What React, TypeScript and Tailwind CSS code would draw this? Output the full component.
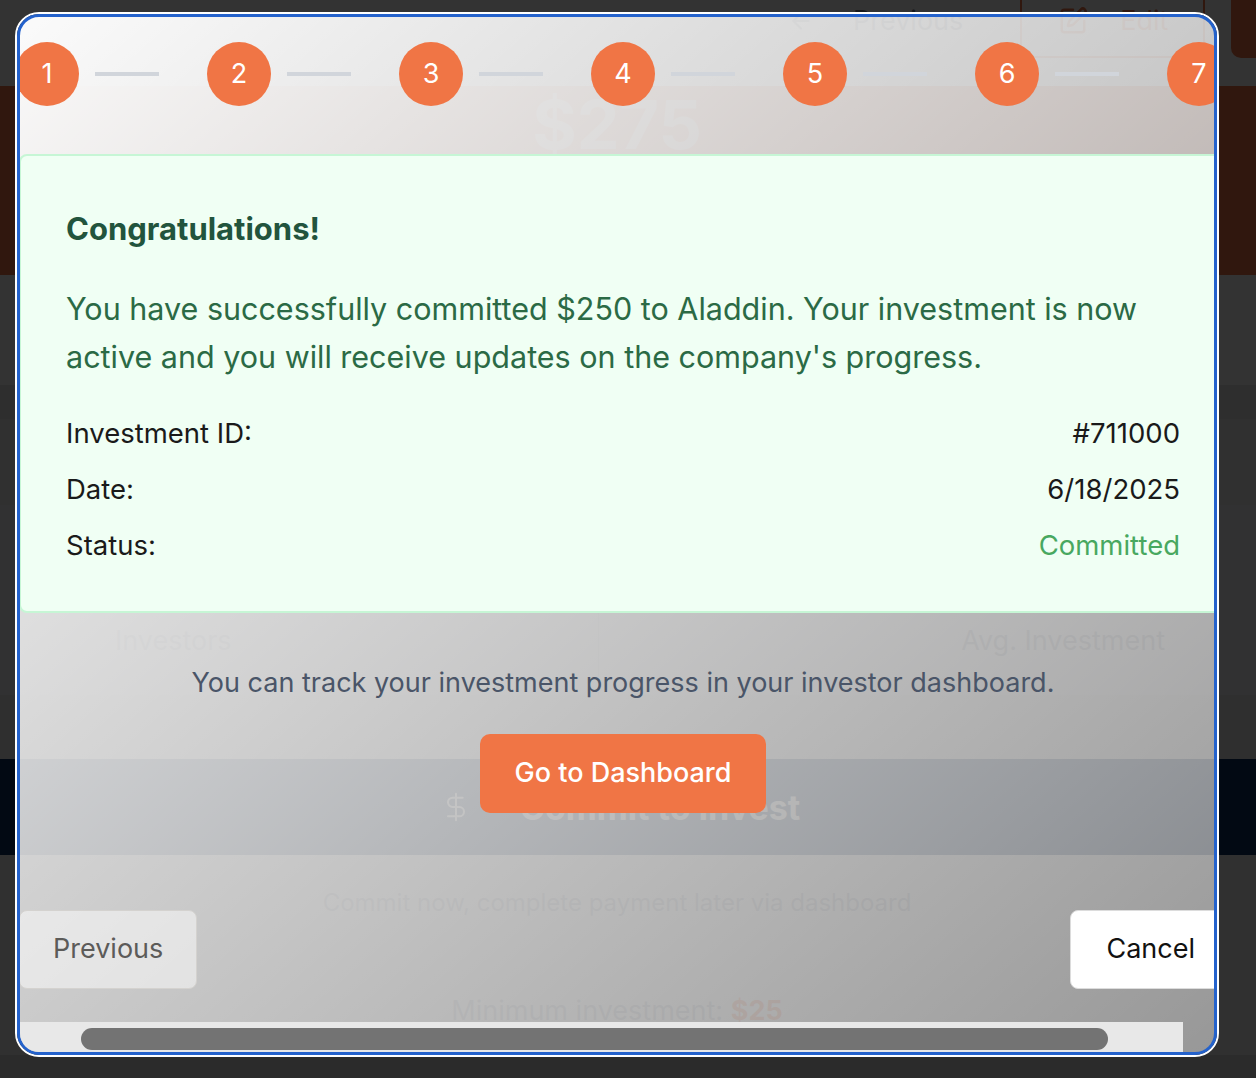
import { ArrowLeft, DollarSign, SquarePen } from 'lucide-react'

const steps = [1, 2, 3, 4, 5, 6, 7]

const details = [
  { label: 'Investment ID:', value: '#711000', tone: 'text-[#1a1a1a]' },
  { label: 'Date:', value: '6/18/2025', tone: 'text-[#1a1a1a]' },
  { label: 'Status:', value: 'Committed', tone: 'text-[#48a860]' },
]

export default function App() {
  return (
    <div className="relative h-[1078px] w-[1256px] overflow-hidden bg-white font-['Inter','Noto_Sans',sans-serif]">
      {/* Page behind the dialog */}
      <div className="flex flex-col">
        <div className="h-[86px] bg-white">
          <div className="-mt-[16px] flex h-[74px] items-stretch pl-[788px]">
            <div className="flex shrink-0 items-center gap-[39px] text-[27px] leading-[36px] text-gray-500">
              <ArrowLeft className="h-[26px] w-[26px]" strokeWidth={2} />
              <span>Previous</span>
            </div>
            <div className="ml-[57px] flex w-[185px] shrink-0 items-center gap-[32px] rounded-[10px] border-2 border-[#f07545] pl-[36px] text-[27px] leading-[36px] text-[#f07545]">
              <SquarePen className="h-[30px] w-[30px]" />
              <span>Edit</span>
            </div>
            <div className="ml-[26px] w-[120px] shrink-0 rounded-[10px] bg-[#f07545]" />
          </div>
        </div>

        <div className="flex h-[189px] justify-center bg-[#f07545] pr-[22px] pt-[4px]">
          <span className="text-[68px] font-bold leading-none text-white/70">$275</span>
        </div>

        <div className="h-[110px] bg-white" />
        <div className="h-[34px] bg-[#e6e6e6]" />
        <div className="h-[86px] bg-[#f0f0f0]" />

        <div className="flex h-[190px] flex-col justify-end bg-[#f4f5f7]">
          <div className="grid h-[95px] grid-cols-[598px_1fr] text-[27px] leading-[36px] text-gray-400">
            <div className="pl-[115px] pt-[23px]">Investors</div>
            <div className="border-l border-gray-300 pr-[91px] pt-[23px] text-right">Avg. Investment</div>
          </div>
        </div>

        <div className="h-[64px] bg-[#e9e9e9]" />

        <div className="flex h-[96px] items-center justify-center gap-[48px] bg-[#0c2f5e] pr-[16px] text-white">
          <DollarSign className="h-[32px] w-[32px]" strokeWidth={1.5} />
          <span className="text-[34px] font-bold">Commit to Invest</span>
        </div>

        <div className="flex h-[200px] flex-col items-center bg-[#f0f0f0] pr-[22px] pt-[30px]">
          <p className="text-[24px] leading-[36px] text-gray-400">Commit now, complete payment later via dashboard</p>
          <p className="mt-[72px] text-[27px] leading-[36px] text-gray-400">
            Minimum investment: <span className="font-bold text-[#f07545]">$25</span>
          </p>
        </div>
        <div className="h-[30px] bg-[#d6d6d6]" />
      </div>

      {/* Backdrop */}
      <div className="absolute inset-0 bg-black/80" />

      {/* Dialog */}
      <div className="absolute left-[15px] top-[12px] h-[1045px] w-[1204px] rounded-[24px] border-2 border-white">
        <div className="flex h-full w-full flex-col overflow-hidden rounded-[22px] border-[3px] border-[#2462cc] bg-[linear-gradient(to_bottom_right,rgba(255,255,255,0.98),rgba(255,255,255,0.5))]">
          <div className="-ml-px flex w-[1208px] shrink-0 flex-col">
            {/* Steps */}
            <div className="flex h-[137px] shrink-0 items-start justify-center gap-[48px] pt-[25px]">
              {steps.map((n) => (
                <div key={n} className="flex shrink-0 items-center gap-4">
                  <div className="flex h-16 w-16 items-center justify-center rounded-full bg-[#f07545] text-[27px] text-white">
                    {n}
                  </div>
                  {n < 7 && <div className="h-1 w-16 bg-[#d1d5db]" />}
                </div>
              ))}
            </div>

            {/* Success card */}
            <div className="h-[459px] shrink-0 rounded-lg border-2 border-[#c6f6d5] bg-[#f0fff4] px-[45px] pt-[53px]">
              <h2 className="text-[31px] font-bold leading-[40px] text-[#22543d]">Congratulations!</h2>
              <p className="mt-[36px] text-[30.5px] leading-[48px] text-[#2b6a45]">
                You have successfully committed $250 to Aladdin. Your investment is now active and you will receive updates
                on the company's progress.
              </p>
              <div className="mt-[34px] flex flex-col gap-[20px] text-[27.5px] leading-[36px]">
                {details.map((d) => (
                  <div key={d.label} className="flex justify-between">
                    <span className="text-[#1a1a1a]">{d.label}</span>
                    <span className={d.tone}>{d.value}</span>
                  </div>
                ))}
              </div>
            </div>

            <p className="mt-[52px] text-center text-[27px] leading-[36px] text-[#4a5568]">
              You can track your investment progress in your investor dashboard.
            </p>

            <button className="mt-[33px] h-[79px] self-center rounded-[10px] bg-[#f07545] px-[35px] text-[27px] font-medium text-white">
              Go to Dashboard
            </button>

            <div className="mt-[97px] flex justify-between">
              <button className="h-[79px] rounded-[8px] border border-[#d4d2cf] bg-white/50 px-[33px] text-[27px] text-[#5c5b59]">
                Previous
              </button>
              <button className="h-[79px] rounded-[8px] border border-[#dcdcdc] bg-white pl-[35px] pr-[31px] text-[27px] text-[#111]">
                Cancel
              </button>
            </div>
          </div>

          {/* Horizontal scrollbar */}
          <div className="mt-auto h-[30px] w-[1163px] shrink-0 bg-[#e8e8e8] pl-[61px] pt-[6px]">
            <div className="h-[22px] w-[1027px] rounded-full bg-[#737373]" />
          </div>
        </div>
      </div>
    </div>
  )
}
